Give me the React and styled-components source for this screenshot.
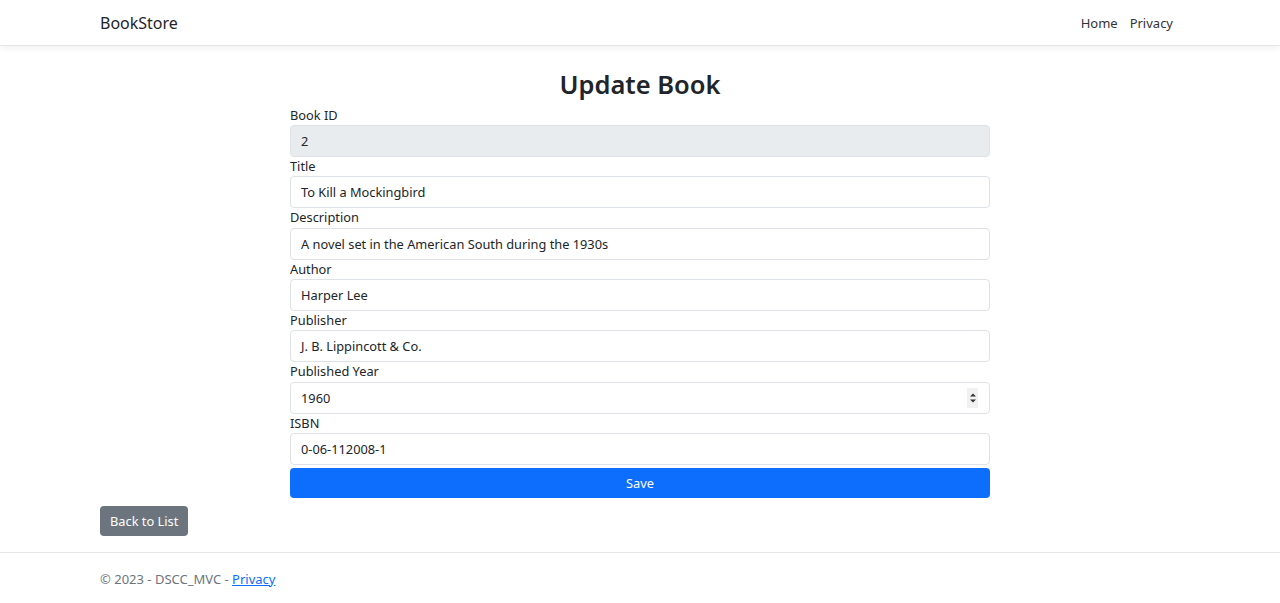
import styled, { createGlobalStyle } from "styled-components";

const GlobalStyle = createGlobalStyle`
    html, body {
        margin: 0;
        padding: 0;
        background: #fff;
        font-family: "Noto Sans", "Liberation Sans", sans-serif;
        color: #212529;
    }
    * { box-sizing: border-box; }
`;

const fields = [
    { label: "Book ID", value: "2", disabled: true },
    { label: "Title", value: "To Kill a Mockingbird" },
    { label: "Description", value: "A novel set in the American South during the 1930s" },
    { label: "Author", value: "Harper Lee" },
    { label: "Publisher", value: "J. B. Lippincott & Co." },
    { label: "Published Year", value: "1960", number: true },
    { label: "ISBN", value: "0-06-112008-1" },
];

const Spinner = () => (
    <SpinBox>
        <svg width="8" height="12" viewBox="0 0 8 12">
            <path d="M1 4.5 L4 1.5 L7 4.5 Z" fill="#333" />
            <path d="M1 7.5 L4 10.5 L7 7.5 Z" fill="#333" />
        </svg>
    </SpinBox>
);

export default function App() {
    return (
        <>
            <GlobalStyle />
            <Navbar>
                <Inner>
                    <Brand>BookStore</Brand>
                    <NavLinks>
                        <NavLink>Home</NavLink>
                        <NavLink>Privacy</NavLink>
                    </NavLinks>
                </Inner>
            </Navbar>

            <Main>
                <Inner column>
                    <Title>Update Book</Title>
                    <Form>
                        {fields.map((f) => (
                            <Group key={f.label}>
                                <Label>{f.label}</Label>
                                <Input disabled={f.disabled}>
                                    <span>{f.value}</span>
                                    {f.number && <Spinner />}
                                </Input>
                            </Group>
                        ))}
                        <SaveButton>Save</SaveButton>
                    </Form>
                    <BackButton>Back to List</BackButton>
                </Inner>
            </Main>

            <Footer>
                <Inner>
                    <FooterText>
                        © 2023 - DSCC_MVC - <FooterLink>Privacy</FooterLink>
                    </FooterText>
                </Inner>
            </Footer>
        </>
    );
}

/* ================= styles ================= */

const Inner = styled.div`
    width: 1080px;
    margin: 0 auto;
    display: flex;
    flex-direction: ${(p) => (p.column ? "column" : "row")};
    align-items: ${(p) => (p.column ? "stretch" : "center")};
    justify-content: space-between;
`;

const Navbar = styled.header`
    height: 46px;
    border-bottom: 1px solid #e5e5e5;
    box-shadow: 0 3px 6px rgba(0, 0, 0, 0.05);
    display: flex;
    align-items: center;
`;

const Brand = styled.div`
    font-size: 16px;
    color: #212529;
`;

const NavLinks = styled.nav`
    display: flex;
    margin-right: 1px;
`;

const NavLink = styled.a`
    font-size: 13px;
    color: #333;
    padding: 0 6px;
`;

const Main = styled.main`
    padding-top: 23px;
    padding-bottom: 16px;
`;

const Title = styled.h2`
    margin: 0;
    text-align: center;
    font-size: 25.5px;
    font-weight: 600;
    line-height: 1.2;
    color: #212529;
`;

const Form = styled.div`
    width: 700px;
    margin: 6px auto 0;
    display: flex;
    flex-direction: column;
`;

const Group = styled.div`
    display: flex;
    flex-direction: column;
`;

const Label = styled.label`
    font-size: 12.8px;
    line-height: 19.33px;
    color: #212529;
`;

const Input = styled.div`
    height: 32px;
    border: 1px solid #dee2e6;
    border-radius: 4px;
    padding: 0 10px;
    display: flex;
    align-items: center;
    justify-content: space-between;
    font-size: 12.8px;
    color: #212529;
    background: ${(p) => (p.disabled ? "#e9ecef" : "#fff")};
`;

const SpinBox = styled.div`
    width: 11px;
    height: 20px;
    background: #f1f1f1;
    display: flex;
    align-items: center;
    justify-content: center;
    margin-right: 1px;
`;

const SaveButton = styled.button`
    margin-top: 3px;
    height: 30px;
    border: none;
    border-radius: 4px;
    background: #0d6efd;
    color: #fff;
    font-family: inherit;
    font-size: 12.8px;
`;

const BackButton = styled.button`
    align-self: flex-start;
    margin-top: 8px;
    height: 30px;
    padding: 0 10px;
    border: none;
    border-radius: 4px;
    background: #6c757d;
    color: #fff;
    font-family: inherit;
    font-size: 12.8px;
`;

const Footer = styled.footer`
    border-top: 1px solid #e5e5e5;
    height: 50px;
    display: flex;
    align-items: center;
`;

const FooterText = styled.div`
    font-size: 13px;
    color: #6c757d;
    margin-top: 3px;
`;

const FooterLink = styled.a`
    color: #0d6efd;
    text-decoration: underline;
`;
